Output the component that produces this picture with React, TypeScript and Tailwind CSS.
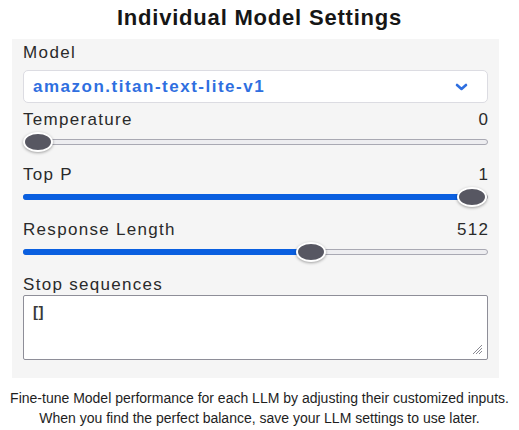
import React from "react";

type SliderProps = {
  label: string;
  value: string;
  percent: number;
};

function Slider({ label, value, percent }: SliderProps) {
  return (
    <div className="mb-[11px] flex flex-col">
      <div className="flex h-[18px] items-center justify-between text-[17px] tracking-[1.3px] text-[#2a2a2a]">
        <span>{label}</span>
        <span className="-mr-[1.3px]">{value}</span>
      </div>
      <div className="relative flex h-[26px] items-center">
        <div className="relative h-[6px] w-full rounded-full border border-[#a9a9b3] bg-[#ededf0]">
          <div
            className="absolute -top-px -left-px h-[6px] rounded-full bg-[#0a5fe0]"
            style={{ width: `${percent}%` }}
          />
        </div>
        <div
          className="absolute top-[3px] h-[20px] w-[30px] -translate-x-1/2 rounded-[50%] border-[2px] border-white bg-[#575762] shadow-[0_1px_3px_rgba(0,0,0,0.35)]"
          style={{ left: `calc(15px + (100% - 31px) * ${percent / 100})` }}
        />
      </div>
    </div>
  );
}

export default function App() {
  return (
    <div className="flex h-[430px] w-[519px] flex-col bg-white font-['Liberation_Sans',Arial,sans-serif]">
      <h1 className="pt-[6px] text-center text-[22px] leading-[24px] font-bold tracking-[0.8px] text-[#161616]">
        Individual Model Settings
      </h1>
      <div className="mx-[12px] mt-[9px] flex w-[487px] flex-col bg-[#f5f5f5] px-[11px] pt-[5px] pb-[18px]">
        <div className="flex h-[18px] items-center text-[17px] tracking-[1.4px] text-[#2a2a2a]">Model</div>
        <div className="mt-[8px] mb-[8px] flex h-[33px] items-center justify-between rounded-[5px] border border-[#dcdce2] bg-white pr-[19px] pl-[9px]">
          <span className="text-[17px] font-bold tracking-[1.5px] text-[#2f6fe0]">amazon.titan-text-lite-v1</span>
          <svg width="13" height="8" viewBox="0 0 13 8" fill="none">
            <path d="M2 2 L6.5 6 L11 2" stroke="#2f6fe0" strokeWidth="2.6" strokeLinecap="round" strokeLinejoin="round" />
          </svg>
        </div>
        <Slider label="Temperature" value="0" percent={0} />
        <Slider label="Top P" value="1" percent={100} />
        <Slider label="Response Length" value="512" percent={63} />
        <div className="flex h-[18px] items-center text-[17px] tracking-[1.3px] text-[#2a2a2a]">Stop sequences</div>
        <div className="relative mt-[1px] h-[65px] rounded-[2px] border border-[#8e8e98] bg-white">
          <div className="px-[9px] pt-[5px] text-[15px] font-bold tracking-[0.5px] text-[#3a3a3a]">[]</div>
          <svg className="absolute right-[4px] bottom-[4px]" width="12" height="12" viewBox="0 0 12 12">
            <path d="M11 2 L2 11 M11 5 L5 11 M11 8 L8 11" stroke="#8a8a92" strokeWidth="1" />
          </svg>
        </div>
      </div>
      <p className="mt-[10px] text-center text-[14px] leading-[20px] text-[#1e1e1e]">
        Fine-tune Model performance for each LLM by adjusting their customized inputs.
        <br />
        When you find the perfect balance, save your LLM settings to use later.
      </p>
    </div>
  );
}
